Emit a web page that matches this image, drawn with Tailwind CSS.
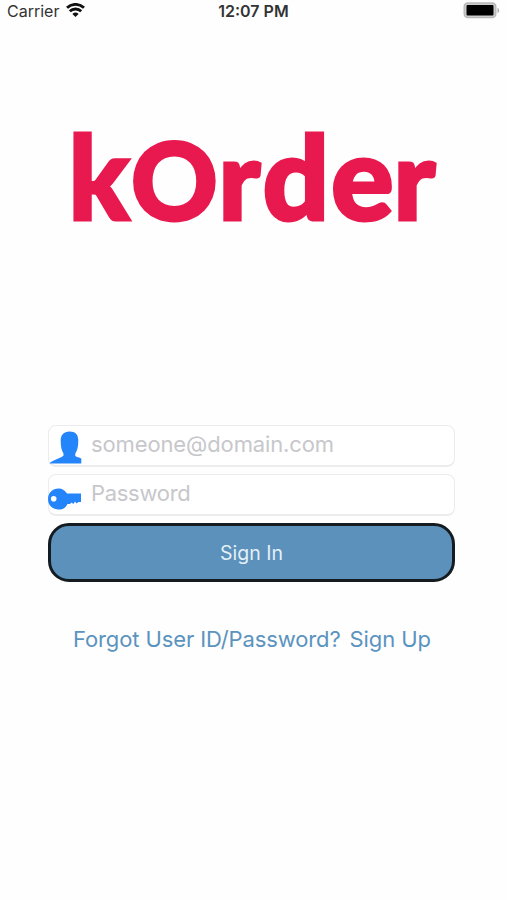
<!DOCTYPE html>
<html lang="en">
<head>
    <meta charset="UTF-8">
    <meta name="viewport" content="width=device-width, initial-scale=1.0">
    <title>kOrder - Sign In</title>
    <script src="https://cdn.jsdelivr.net/npm/@tailwindcss/browser@4"></script>
</head>
<body class="bg-[#fefefe] font-['Inter',sans-serif] h-screen overflow-hidden">
    <!-- Status bar -->
    <header class="h-[22px] px-[7px] grid grid-cols-3 items-center text-[#333]">
        <div class="flex items-center gap-[7px]">
            <span class="text-[16px] leading-[22px]">Carrier</span>
            <svg class="w-[19px] h-[14px] -mt-[3px]" viewBox="0 0 19 14">
                <g fill="none" stroke="#111" stroke-width="2.9">
                    <path d="M1 4.800a12.300 12.300 0 0 1 17 0"/>
                    <path d="M3.800 8.300a8.200 8.200 0 0 1 11.400 0"/>
                </g>
                <path d="M6.400 11a4.500 4.500 0 0 1 6.200 0L9.500 14z" fill="#111"/>
            </svg>
        </div>
        <span class="text-center text-[16px] leading-[22px] font-semibold whitespace-nowrap">12:07 PM</span>
        <svg class="w-[37px] h-[17px] -mt-px justify-self-end" viewBox="0 0 37 17">
            <rect x="1.200" y="1" width="31.600" height="14.600" rx="3.500" fill="#ccc" stroke="#b8b8b8" stroke-width="1.400"/>
            <rect x="3.500" y="3" width="27" height="10.500" rx="1" fill="#000"/>
            <path d="M34.500 6c2.200.6 2.200 4.400 0 5z" fill="#aaa"/>
        </svg>
    </header>

    <main class="px-12">
        <!-- Logo -->
        <svg class="mt-[78px] ml-[2px] w-[408px] h-[155px]" viewBox="50 100 408 155">
            <g class="font-['Lato',sans-serif] font-black text-[117px]" fill="#e8194f" stroke="#e8194f" stroke-width="3">
                <text y="220"><tspan x="68.500" textLength="61" lengthAdjust="spacingAndGlyphs">k</tspan><tspan x="131" class="text-[107px]">O</tspan><tspan x="218.500" class="text-[111px]">r</tspan><tspan x="262.500">d</tspan><tspan x="331">e</tspan><tspan x="393.500" class="text-[111px]">r</tspan></text>
            </g>
        </svg>

        <!-- Sign in form -->
        <form class="mt-[170px] w-[407px]">
            <label class="flex items-center h-[42px] bg-white border border-[#ececec] border-b-2 rounded-[8px]">
                <svg class="w-[33px] h-[33px] mt-[3px]" viewBox="0 0 33 33" fill="#2485fb">
                    <path d="M20.500 0.500c6 0 8.800 3 8.800 9 0 6-1 10-3 13v2.500c1.500 1.300 4 1 6 2.500V32.500H0.500c1-1.500 4-2.800 7-4.200 3.500-1.500 5-2 7-3.800v-2c-2-3-2.800-7-2.800-13 0-5.500 3-9 8.800-9z"/>
                </svg>
                <input type="text" placeholder="someone@domain.com" class="ml-[9px] mb-[3px] w-[340px] text-[22px] leading-[30px] tracking-[-0.120px] outline-none placeholder:text-[#c7c7cb]">
            </label>
            <label class="mt-[7px] flex items-center h-[42px] bg-white border border-[#ececec] border-b-2 rounded-[8px]">
                <svg class="w-[33px] h-[22px] mt-[8px] -ml-px" viewBox="0 0 33 22" fill="#2485fb">
                    <path fill-rule="evenodd" d="M10.500 0.500c4 0 6.500 2 8.500 5H33v8.500h-2.500l-2 1.500-1.500-2-1.500 2.500-2-1.500-1.500 1.500h-2.500c-1.500 3.500-4 5.500-8 5.500C4 21.500 0 17 0 11S4.500 0.500 10.500 0.500zM5.700 8a2.800 2.800 0 1 0 0 5.600 2.800 2.800 0 0 0 0-5.600z"/>
                </svg>
                <input type="password" placeholder="Password" class="ml-[10px] mb-[4px] w-[340px] text-[22px] leading-[30px] tracking-[-0.300px] outline-none placeholder:text-[#c7c7cb]">
            </label>
            <button type="button" class="mt-[7px] block w-full h-[59px] rounded-[21px] border-[3px] border-[#141c22] bg-[#5b91ba] text-[#e4eff8] text-[19.500px]"><span class="block pt-[2px]">Sign In</span></button>
        </form>

        <!-- Links -->
        <div class="mt-[42px] ml-[25px] flex gap-[9px] whitespace-nowrap text-[22px] leading-[30px] text-[#5b93bf]">
            <a href="#" class="tracking-[-0.120px]">Forgot User ID/Password?</a>
            <a href="#" class="tracking-[-0.100px]">Sign Up</a>
        </div>
    </main>
</body>
</html>
